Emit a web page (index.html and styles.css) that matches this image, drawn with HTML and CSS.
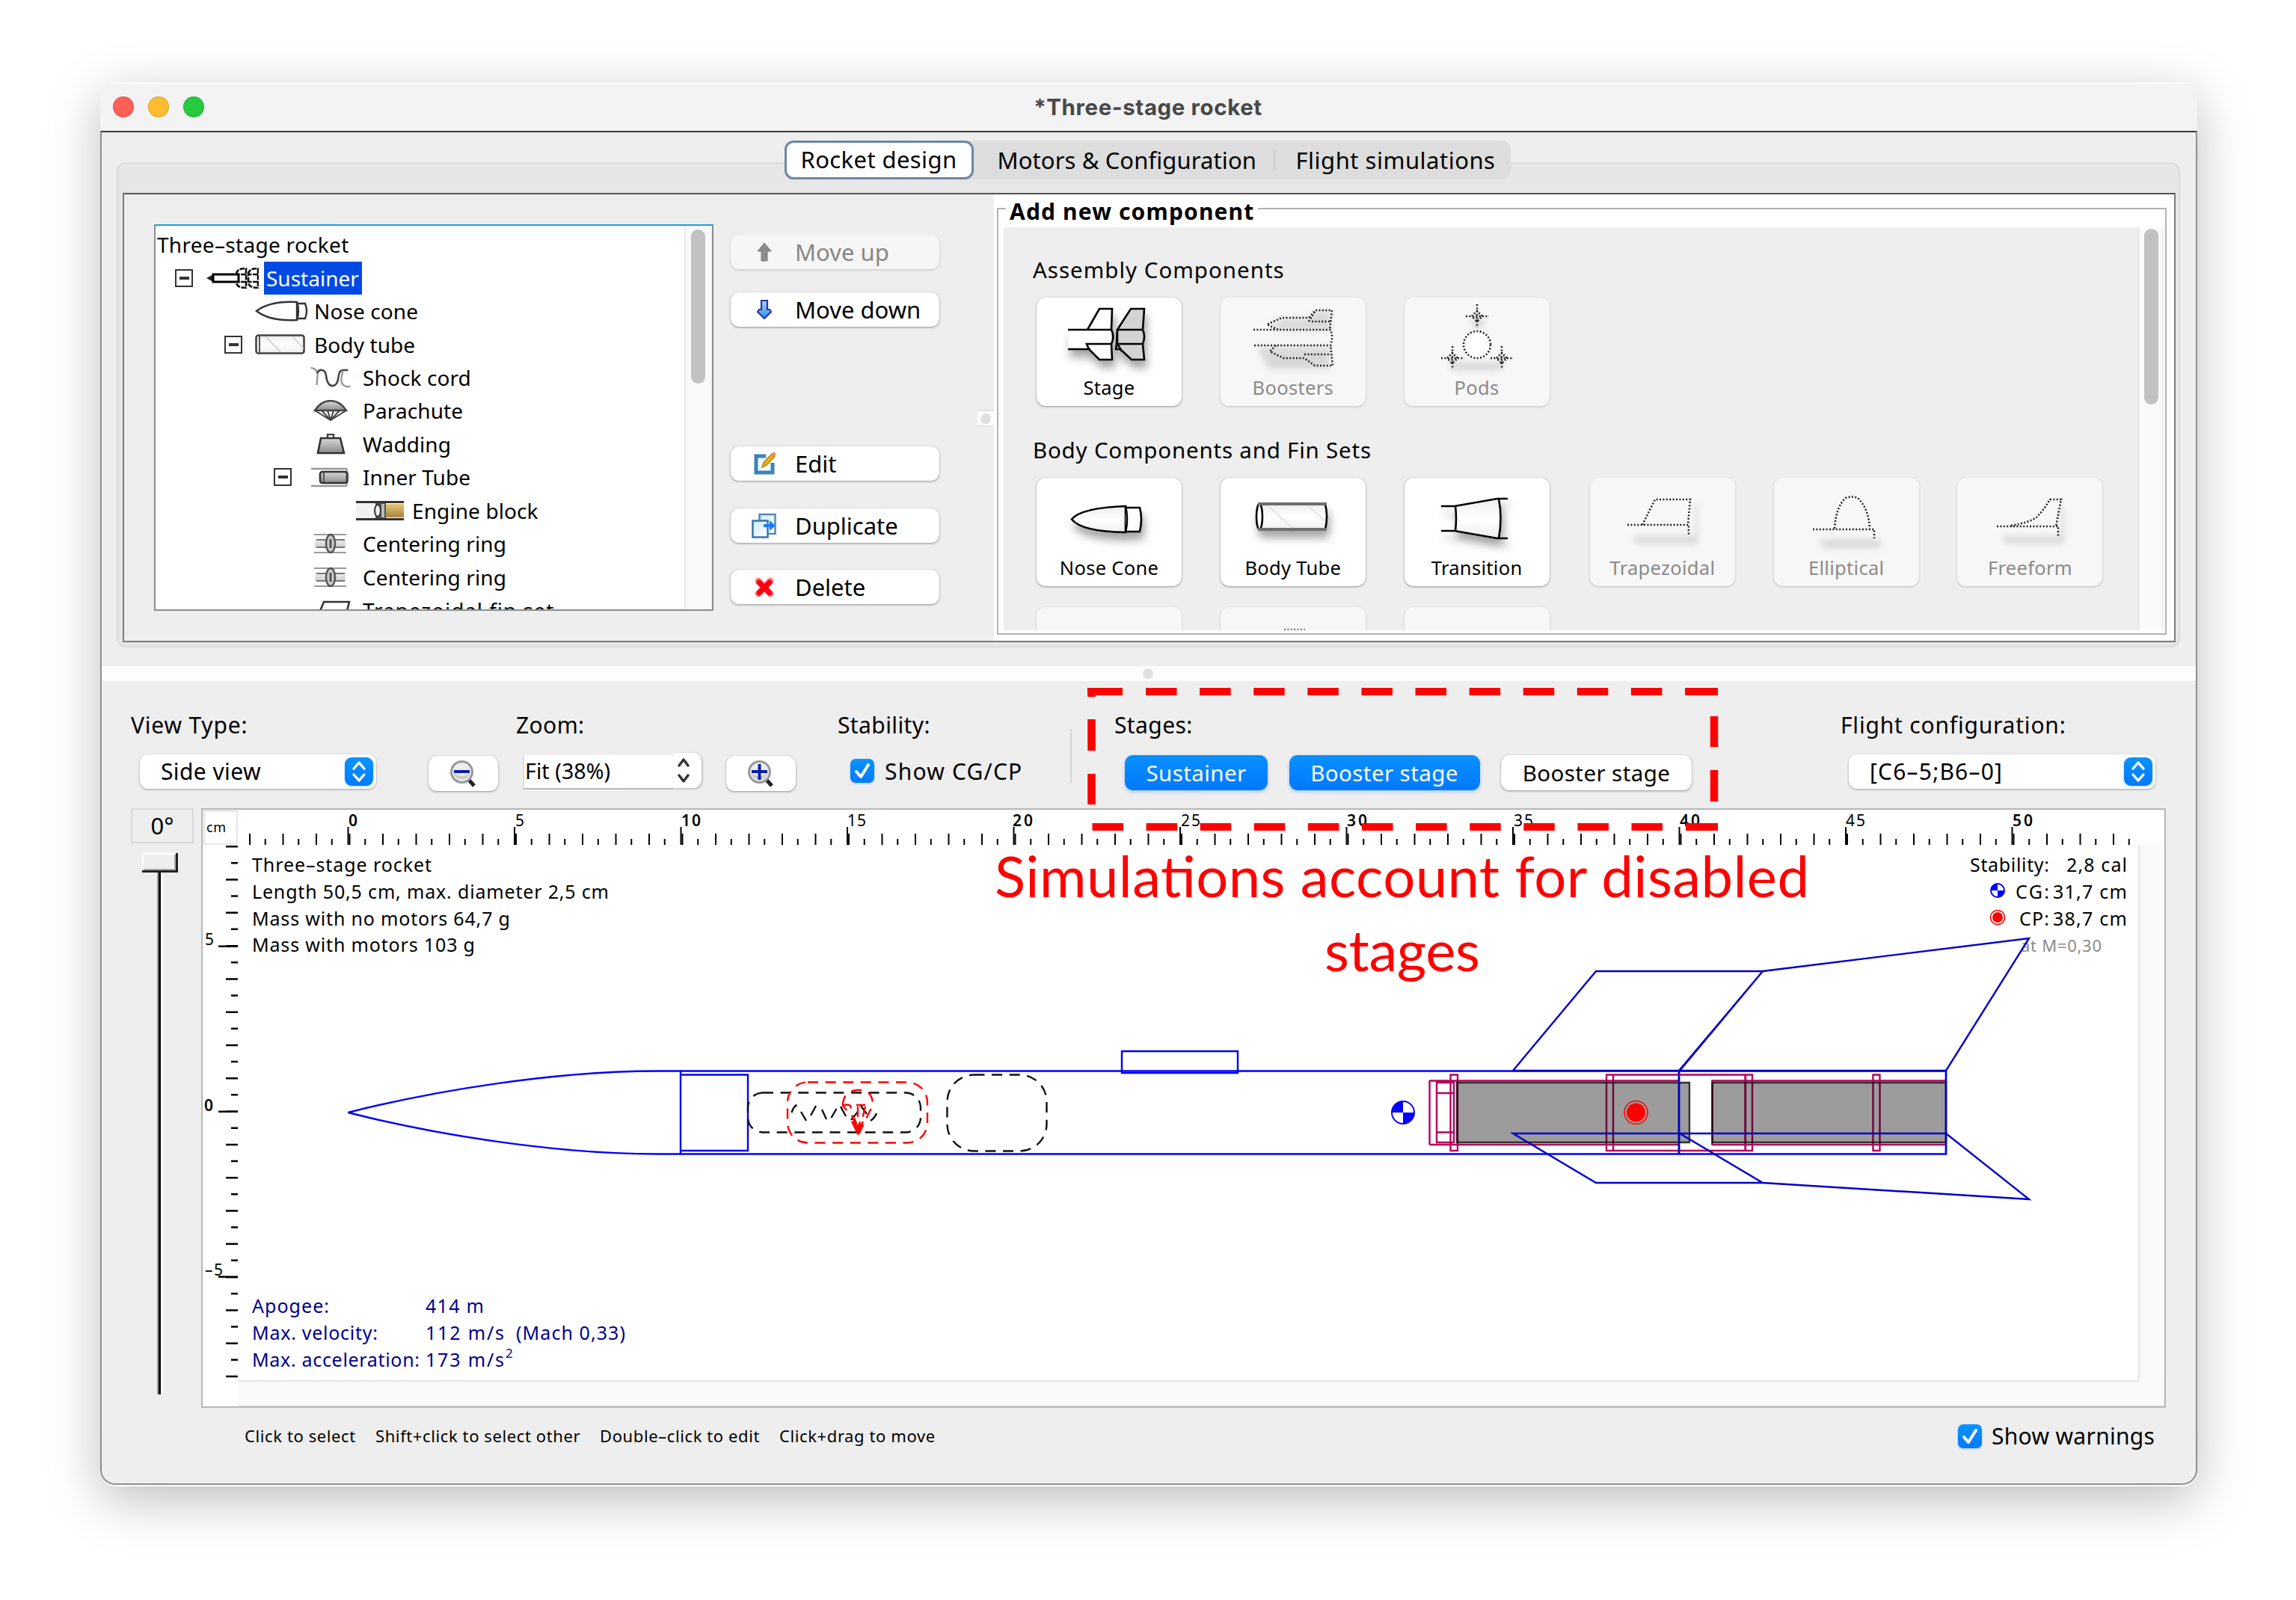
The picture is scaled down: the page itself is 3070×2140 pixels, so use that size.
FILE: index.html
```html
<!DOCTYPE html>
<html lang="en">
<head>
<meta charset="utf-8">
<title>Three-stage rocket</title>
<link rel="stylesheet" href="styles.css">
</head>
<body>
<svg class="defs" width="0" height="0" aria-hidden="true">
  <defs>
    <linearGradient id="metal" x1="0" y1="0" x2="0" y2="1"><stop offset="0" stop-color="#d8d8d8"/><stop offset="1" stop-color="#8c8c8c"/></linearGradient>
    <linearGradient id="paper" x1="0" y1="0" x2="0" y2="1"><stop offset="0" stop-color="#ececec"/><stop offset=".5" stop-color="#fff"/><stop offset="1" stop-color="#eee"/></linearGradient>
    <linearGradient id="gold" x1="0" y1="0" x2="0" y2="1"><stop offset="0" stop-color="#e6c67c"/><stop offset="1" stop-color="#a8843c"/></linearGradient>
    <linearGradient id="arrowBlue" x1="0" y1="0" x2="0" y2="1"><stop offset="0" stop-color="#a9d0ff"/><stop offset="1" stop-color="#2e8fe0"/></linearGradient>
    <linearGradient id="sheet" x1="0" y1="0" x2="1" y2="1"><stop offset="0" stop-color="#cfe9fa"/><stop offset="1" stop-color="#fff"/></linearGradient>
    <symbol id="i-ring" viewBox="0 0 46 28"><path d="M1 2h43M1 26h43" stroke="#999" stroke-width="2"/><path d="M2 9h41v10H2z" fill="url(#metal)" opacity=".45"/><path d="M4 9h38M4 19h38" stroke="#777" stroke-width="2"/><ellipse cx="23" cy="14" rx="6" ry="12" fill="#ccc" stroke="#555" stroke-width="2.5"/><path d="M23 8v12" stroke="#555" stroke-width="3"/></symbol>
    <symbol id="i-updown" viewBox="0 0 38 38"><path d="M12 15l7-8 7 8M12 23l7 8 7-8" fill="none" stroke="currentColor" stroke-width="3.4" stroke-linecap="round" stroke-linejoin="round"/></symbol>
    <symbol id="i-check" viewBox="0 0 32 32"><path d="M8 17l6 7L24 8" fill="none" stroke="#fff" stroke-width="4" stroke-linecap="round" stroke-linejoin="round"/></symbol>
    <symbol id="i-lens" viewBox="0 0 36 38"><path d="M23 25l9 10" stroke="#222" stroke-width="5"/><circle cx="15.500" cy="16.500" r="14" fill="#ededf0" stroke="#999" stroke-width="3"/><path d="M4 18q12 8 23 0a12 12 0 0 1-23 0z" fill="#c9c9cc"/></symbol>
  </defs>
</svg>

<div class="window">
  <header class="titlebar">
    <div class="lights"><i class="light red"></i><i class="light amber"></i><i class="light green"></i></div>
    <h1 class="title">*Three-stage rocket</h1>
  </header>

  <div class="content">
    <nav class="tabs">
      <span class="tab active">Rocket design</span>
      <span class="tab tab-motors">Motors &amp; Configuration</span>
      <span class="tab tab-sim">Flight simulations</span>
    </nav>

    <section class="design-outline">
      <div class="design">
        <div class="left-pane">
          <div class="tree">
            <ul class="tree-list">
              <li class="row root"><span class="name">Three–stage rocket</span></li>
              <li class="row lv1"><i class="expander"></i>
                <svg class="ic" width="70" height="28" viewBox="0 0 70 28"><path d="M0 14l9-5v10z" fill="#222"/><path d="M9 9h34v10H9z" fill="#fff" stroke="#000" stroke-width="3"/><path d="M40 9q0-8 13-8v26q-13 0-13-8M53 9H42M53 19H42M56 9q0-8 13-8v26q-13 0-13-8zM69 9H57M69 19H57" fill="none" stroke="#111" stroke-width="2.6" stroke-dasharray="7 1.500"/></svg>
                <span class="name selected">Sustainer</span></li>
              <li class="row lv2"><svg class="ic" width="71" height="28" viewBox="0 0 71 28"><path d="M56 2Q20 0 2 14q18 14 54 12z" fill="#fff" stroke="#333" stroke-width="2.4"/><path d="M56 2q4 12 0 24M57 4h10q4 10 0 20H57" fill="none" stroke="#333" stroke-width="2.4"/></svg><span class="name">Nose cone</span></li>
              <li class="row lv2 open"><i class="expander"></i><svg class="ic" width="67" height="27" viewBox="0 0 67 27"><rect x="1.500" y="1.500" width="64" height="24" rx="3" fill="url(#paper)" stroke="#444" stroke-width="2.600"/><path d="M6 2v23" stroke="#555" stroke-width="2"/><path d="M14 3l20 21M50 3l15 16" stroke="#ccc" stroke-width="1.500" fill="none"/></svg><span class="name">Body tube</span></li>
              <li class="row lv3"><svg class="ic" width="55" height="28" viewBox="0 0 55 28"><path d="M1 1q10 1 9 12t-1 11" fill="none" stroke="#999" stroke-width="2.4"/><path d="M10 8q2-5 6-4 5 0 6 10 2 12 9 11 6-1 7-12 1-9 6-9h7" fill="none" stroke="#444" stroke-width="2.6"/><path d="M44 6q-6 16 4 20h6" fill="none" stroke="#999" stroke-width="2.4"/></svg><span class="name">Shock cord</span></li>
              <li class="row lv3"><svg class="ic" width="46" height="28" viewBox="0 0 46 28"><path d="M2 14Q10 1 23 1t21 13z" fill="url(#metal)" stroke="#444" stroke-width="2.400"/><path d="M2 14l21 13 21-13M11 14l12 13 12-13M19 14l4 13 4-13" fill="none" stroke="#444" stroke-width="2"/></svg><span class="name">Parachute</span></li>
              <li class="row lv3"><svg class="ic" width="42" height="28" viewBox="0 0 42 28"><path d="M17 6V1h8v5" fill="none" stroke="#444" stroke-width="2.500"/><path d="M8 6h26l5 20H4z" fill="url(#metal)" stroke="#333" stroke-width="2.600"/></svg><span class="name">Wadding</span></li>
              <li class="row lv3 open"><i class="expander"></i><svg class="ic" width="52" height="27" viewBox="0 0 52 27"><path d="M0 2h47q5 11 0 23H0" fill="none" stroke="#999" stroke-width="2.400"/><rect x="12" y="6" width="36" height="15" rx="3" fill="url(#metal)" stroke="#333" stroke-width="2.600"/><path d="M17 7v13" stroke="#555" stroke-width="2"/></svg><span class="name">Inner Tube</span></li>
              <li class="row lv4"><svg class="ic" width="64" height="26" viewBox="0 0 64 26"><path d="M0 3h26v20H0z" fill="#f2f2f2"/><path d="M0 1.500h64M0 24.500h64" stroke="#333" stroke-width="3"/><path d="M26 3h14v20H26z" fill="#555"/><ellipse cx="29" cy="13" rx="4" ry="8" fill="#eee" stroke="#333" stroke-width="2"/><path d="M36 4v18" stroke="#bbb" stroke-width="4"/><path d="M40 4h24v18H40z" fill="url(#gold)"/></svg><span class="name">Engine block</span></li>
              <li class="row lv3"><svg class="ic" width="46" height="28"><use href="#i-ring"/></svg><span class="name">Centering ring</span></li>
              <li class="row lv3"><svg class="ic" width="46" height="28"><use href="#i-ring"/></svg><span class="name">Centering ring</span></li>
              <li class="row lv3"><svg class="ic" width="54" height="27" viewBox="0 0 54 27"><path d="M18 2h34l-6 24H8z" fill="#fff" stroke="#333" stroke-width="2.600"/></svg><span class="name spaced">Trapezoidal fin set</span></li>
            </ul>
            <div class="scrollbar"><i class="thumb tree-thumb"></i></div>
          </div>

          <div class="actions">
            <button class="btn action disabled"><svg class="aic" width="24" height="26" viewBox="0 0 24 26"><path d="M12 1l9 11h-5v13H8V12H3z" fill="#8c8c8c" stroke="#7a7a7a"/></svg>Move up</button>
            <button class="btn action down"><svg class="aic" width="24" height="26" viewBox="0 0 24 26"><path d="M12 25l9-9-2-3h-3V1H8v12H5l-2 3z" fill="url(#arrowBlue)" stroke="#2b35a8" stroke-width="2.200"/></svg>Move down</button>
            <button class="btn action edit"><svg class="aic" width="32" height="32" viewBox="0 0 32 32"><path d="M18 6H5v22h22V15" fill="#f4f9fd" stroke="#3c83b8" stroke-width="5"/><path d="M13 21l2-6L26 3l4 3-11 12z" fill="#f5b400" stroke="#b97f1a" stroke-width="1.500"/><path d="M26 3l2-3 4 3-2 3z" fill="#ef8d7a"/></svg>Edit</button>
            <button class="btn action dup"><svg class="aic" width="34" height="34" viewBox="0 0 34 34"><rect x="10.500" y="2" width="21" height="26" fill="url(#sheet)" stroke="#4f86b4" stroke-width="2.400"/><rect x="1.500" y="10.500" width="20" height="22" fill="url(#sheet)" stroke="#3c78ac" stroke-width="2.600"/><path d="M16 15h8v-5l8 7-8 7v-5h-8z" fill="#1b7cf5"/></svg>Duplicate</button>
            <button class="btn action del"><svg class="aic" width="28" height="28" viewBox="0 0 28 28"><path d="M6 6l16 17M22 6L6 23" stroke="#f88" stroke-width="9" stroke-linecap="round"/><path d="M7 8l14 14M21 8L7 22" stroke="#fb0012" stroke-width="7" stroke-linecap="round"/></svg>Delete</button>
          </div>
          <div class="v-handle"><i class="dot"></i></div>
        </div>

        <div class="right-pane">
          <div class="group">
            <h2 class="group-title">Add new component</h2>
            <div class="group-body">
              <div class="components">
                <h3 class="sub">Assembly Components</h3>
                <div class="cards">
                  <div class="card"><svg class="art" viewBox="0 0 194 105">
                    <g class="shade"><path d="M42 43h58v26H42z" fill="#fff"/><g class="ink"><path d="M68 43L84 15h17l-1 28M70 69l-3-7h33l1 21H84z" fill="#fff"/><path d="M42 43h58q5 9 0 19M42 69h30"/><path d="M108 43l18-28h18l-2 28q4 9 0 19l2 21h-17L112 69h-6l1-7z" fill="#d3d3d3"/><path d="M108 43h34M107 62h35M108 43v19l6 10"/></g></g></svg>Stage</div>
                  <div class="card off"><svg class="art" viewBox="0 0 194 105">
                    <path d="M50 66h96v30H64zM68 32l18-4h34l8-10h19v26H77z" class="haze"/><g class="dots"><path d="M44 43h103q4 10 0 21H44M77 43L62 36l20-9h36l9-10h22l-3 26M118 32l8-13M122 32h25M74 64l-8 8 18 9h28l14 10h24l-3-27M112 76h36"/></g></svg>Boosters</div>
                  <div class="card off"><svg class="art" viewBox="0 0 194 105">
                    <path d="M86 30h22l-6 12H94zM58 86h80l-14 12H66z" class="haze"/><g class="dots"><circle cx="97" cy="63" r="18" fill="#fff"/><path d="M97 9v31M82 25h31M90 25l7-7 7 7-7 7zM64 65v31M49 81h31M57 81l7-7 7 7-7 7zM130 65v31M115 81h31M123 81l7-7 7 7-7 7z"/></g></svg>Pods</div>
                </div>
                <h3 class="sub second">Body Components and Fin Sets</h3>
                <div class="cards">
                  <div class="card"><svg class="art" viewBox="0 0 194 105">
                    <g class="ink shade"><path d="M119 38Q60 40 47 55.500 60 72 119 73z" fill="url(#paper)"/><path d="M119 38q4 17 0 35M120 40h18q4 15 0 32h-18" fill="#fff"/></g></svg>Nose Cone</div>
                  <div class="card"><svg class="art" viewBox="0 0 194 105">
                    <g class="ink shade"><path d="M52 35h88q4 17 0 34H52z" fill="url(#paper)"/><ellipse cx="52" cy="52" rx="4" ry="17" fill="#fff"/></g><path d="M50 35h92M50 69h92" stroke="#6e6e6e" stroke-width="4"/><path d="M64 38l32 29M118 38l22 20" stroke="#ddd" stroke-width="1.500"/></svg>Body Tube</div>
                  <div class="card"><svg class="art" viewBox="0 0 194 105">
                    <g class="ink shade"><path d="M68 38l58-10q5 26 0 53L68 71z" fill="url(#paper)" stroke="none"/><path d="M49 38h18l57-10h14M49 71h18l57 10h14M68 38q2 16 0 33M126 28q5 26 0 53"/></g></svg>Transition</div>
                  <div class="card off fin-first"><svg class="art" viewBox="0 0 194 105">
                    <path d="M58 78h82V36h4v52H62z" class="haze"/><g class="dots"><path d="M70 63l17-34h47l-3 34M50 63h82v13"/></g></svg>Trapezoidal</div>
                  <div class="card off"><svg class="art" viewBox="0 0 194 105">
                    <path d="M62 82h80v12H66z" class="haze"/><g class="dots"><path d="M81 68q2-30 15-41 8-3 16 0 15 15 16 41M52 69h82v12"/></g></svg>Elliptical</div>
                  <div class="card off"><svg class="art" viewBox="0 0 194 105">
                    <path d="M60 78h78V40h5v48H64z" class="haze"/><g class="dots"><path d="M72 64q24-4 34-11 10-10 18-24h15l-7 36M53 65h82v13"/></g></svg>Freeform</div>
                </div>
                <div class="cards third">
                  <div class="card off"></div>
                  <div class="card off"><svg class="art" viewBox="0 0 194 105"><path d="M85 30h28" stroke="#777" stroke-width="2.500" stroke-dasharray="2 2.400"/></svg></div>
                  <div class="card off"></div>
                </div>
              </div>
              <div class="scrollbar wide"><i class="thumb group-thumb"></i></div>
            </div>
          </div>
        </div>
      </div>
    </section>

    <div class="h-handle"><i class="dot"></i></div>

    <section class="controls">
      <div class="ctl view-type"><label>View Type:</label>
        <div class="select"><span class="value">Side view</span><svg class="stepper" width="38" height="38"><use href="#i-updown"/></svg></div></div>
      <div class="ctl zoom"><label class="zoom-label">Zoom:</label>
        <div class="zoom-row">
          <button class="btn lens"><svg width="36" height="38" viewBox="0 0 36 38"><use href="#i-lens" width="36" height="38"/><path d="M5 16h21" stroke="#0a1ea8" stroke-width="4"/></svg></button>
          <div class="combo"><span class="combo-field">Fit (38%)</span><span class="combo-step"><svg width="38" height="47" viewBox="0 -4 38 47"><path d="M7 13l6-8 6 8M7 26l6 8 6-8" fill="none" stroke="#333" stroke-width="3.400" stroke-linecap="round" stroke-linejoin="round"/></svg></span></div>
          <button class="btn lens"><svg width="36" height="38" viewBox="0 0 36 38"><use href="#i-lens" width="36" height="38"/><path d="M5 16h21M15.500 6v21" stroke="#0a1ea8" stroke-width="4"/></svg></button>
        </div></div>
      <div class="ctl stability"><label>Stability:</label>
        <div class="check cg-check"><svg class="box" width="32" height="32"><use href="#i-check"/></svg>Show CG/CP</div></div>
      <i class="divider"></i>
      <div class="ctl stages"><label>Stages:</label>
        <div class="stage-row"><button class="btn toggle on s1">Sustainer</button><button class="btn toggle on">Booster stage</button><button class="btn toggle">Booster stage</button></div></div>
      <div class="ctl flight"><label>Flight configuration:</label>
        <div class="select wide-select"><span class="value">[C6–5;B6–0]</span><svg class="stepper" width="38" height="38"><use href="#i-updown"/></svg></div></div>
    </section>

    <section class="main">
      <div class="rotation"><div class="angle">0°</div><i class="knob"></i><i class="track"></i></div>
      <svg class="figure" viewBox="269 1081 2627 802" width="2627" height="802">
        <rect x="269" y="1081" width="2627" height="802" fill="#fff"/>
        <path d="M2859 1130h34v716h-34zM318 1846h2576v35H318z" fill="#fafafa"/>
        <path d="M2860 1130v716M318 1847h2542" stroke="#e6e6e6" stroke-width="2"/>
        <path d="M318 1880h2576" stroke="#eee" stroke-width="2"/>
        <rect x="270" y="1082" width="2625" height="800" fill="none" stroke="#b9b9b9" stroke-width="2.400"/>
        <path d="M273 1085h44v44h-44z" fill="#fff" stroke="#e6e6e6" stroke-width="2"/>

        <!-- rulers: half units, units, every fifth unit -->
        <g class="ticks">
          <path d="M353.750 1126H2850" stroke-width="8" stroke-dasharray="2 42.500"/>
          <path d="M333 1122.500H2850" stroke-width="15" stroke-dasharray="2 42.500"/>
          <path d="M464.500 1118H2700" stroke-width="24" stroke-dasharray="2 220.500"/>
          <path d="M313.500 1153V1842" stroke-width="9" stroke-dasharray="2.500 41.800"/>
          <path d="M310 1131V1843" stroke-width="16" stroke-dasharray="2.500 41.800"/>
          <path d="M305 1264.500V1712" stroke-width="26" stroke-dasharray="2.500 218.500"/>
        </g>
        <g class="t20">
          <text x="276" y="1113" class="t18" textLength="26">cm</text>
          <text x="466" y="1105" class="b">0</text><text x="689" y="1105">5</text>
          <text x="911" y="1105" class="b" textLength="26">10</text><text x="1133" y="1105" textLength="25">15</text>
          <text x="1354" y="1105" class="b" textLength="27">20</text><text x="1579" y="1105" textLength="26">25</text>
          <text x="1801" y="1105" class="b" textLength="27">30</text><text x="2024" y="1105" textLength="26">35</text>
          <text x="2246" y="1105" class="b" textLength="27">40</text><text x="2468" y="1105" textLength="26">45</text>
          <text x="2691" y="1105" class="b" textLength="27">50</text>
          <text x="274" y="1264">5</text><text x="273" y="1486" class="b">0</text><text x="274" y="1706" textLength="24">–5</text>
        </g>

        <g class="t25">
          <text x="337" y="1166" textLength="240">Three–stage rocket</text>
          <text x="337" y="1202" textLength="477">Length 50,5 cm, max. diameter 2,5 cm</text>
          <text x="337" y="1238" textLength="345">Mass with no motors 64,7 g</text>
          <text x="337" y="1273" textLength="298">Mass with motors 103 g</text>
          <text x="2634" y="1166" textLength="106">Stability:</text><text x="2763" y="1166" textLength="81">2,8 cal</text>
          <text x="2695" y="1202" textLength="45">CG:</text><text x="2745" y="1202" textLength="99">31,7 cm</text>
          <text x="2700" y="1238" textLength="40">CP:</text><text x="2745" y="1238" textLength="99">38,7 cm</text>
          <text x="2702" y="1273" class="mach" textLength="108">at M=0,30</text>
        </g>
        <g class="t25 navy">
          <text x="337" y="1756" textLength="103">Apogee:</text><text x="569" y="1756" textLength="78">414 m</text>
          <text x="337" y="1792" textLength="168">Max. velocity:</text><text x="569" y="1792" textLength="105">112 m/s</text><text x="690" y="1792" textLength="146">(Mach 0,33)</text>
          <text x="337" y="1828" textLength="224">Max. acceleration:</text><text x="569" y="1828" textLength="105">173 m/s</text><text x="676" y="1816" class="t16">2</text>
        </g>

        <!-- body -->
        <g class="body-line">
          <path d="M910 1432.500H880C740 1432.500 580 1459 465.500 1488 580 1517 740 1543.500 880 1543.500H910"/>
          <path d="M910 1432.500H2602V1543.500H910zM2245 1432v112M910 1437.500h90v101.500h-90"/>
          <path d="M1500 1406h155v29h-155z"/>
        </g>
        <g class="mount">
          <path d="M1911.500 1445.500H2245M1911.500 1531H2245M1911.500 1445v86M1921 1448h23v80h-23zM1921 1462h23M1921 1514.500h23M1939.500 1437.500h9.500v101.500h-9.500zM2148 1437.500h9v101.500h-9zM2157 1437.500h176.500v101.500H2157zM2334 1437.500h9v101.500h-9zM2504.500 1437.500h9v101.500h-9zM2602 1445.500H2289.500V1531H2602"/>
        </g>
        <g class="motor"><path d="M1948 1448h311v80h-311zM2289.500 1448H2602v80h-312.500z"/></g>
        <path d="M2245 1432v112" stroke="#0000c0" stroke-width="2.600"/>
        <g class="fins">
          <path d="M2023 1432l111-133h223l-112 133zM2246 1432l111-133 356-44-111 177z"/>
          <path d="M2023 1516l111 66h223l-111-66zM2246 1516l111 66 356 22-111-88z"/>
        </g>
        <path d="M2602 1432v112" class="edge"/>

        <g class="dash black">
          <rect x="1000" y="1461.500" width="231" height="53" rx="20"/>
          <rect x="1266.500" y="1437.500" width="133" height="102" rx="36"/>
          <path class="solid" d="M1058.500 1488q3-9 7-10M1071 1487l7 12M1084 1492l7-13M1099 1484l6 13M1111.500 1495l7-12M1124 1480l7 13M1138 1498l9-11M1151 1479l8 11M1164 1499q5-3 8-10"/>
        </g>
        <g class="dash red-line">
          <rect x="1053" y="1447.500" width="187" height="81" rx="27"/>
          <path d="M1127 1479q0-20 20-21t20 20l-18 37-6-18zM1127 1479q6-3 10 0l8 34M1145 1478h12M1147 1480v30M1157 1480l-6 25"/>
          <path d="M1139 1500l8 16 7-16M1143 1500l4 15M1150 1500l-3 15" class="solid"/>
        </g>

        <!-- centre of gravity and centre of pressure marks -->
        <g class="cg"><circle cx="1876" cy="1488" r="15"/><path d="M1876 1488v-15a15 15 0 0 0-15 15zM1876 1488v15a15 15 0 0 0 15-15z"/></g>
        <g class="cg"><circle cx="2671" cy="1191" r="9"/><path d="M2671 1191v-9a9 9 0 0 0-9 9zM2671 1191v9a9 9 0 0 0 9-9z"/></g>
        <g class="cp"><circle cx="2187.500" cy="1488" r="15.500"/><circle cx="2187.500" cy="1488" r="12.500" class="fill"/><circle cx="2671" cy="1227" r="9.500"/><circle cx="2671" cy="1227" r="7" class="fill"/></g>
      </svg>
    </section>

    <footer class="hints">
      <span class="h1">Click to select</span><span class="h2">Shift+click to select other</span><span class="h3">Double–click to edit</span><span class="h4">Click+drag to move</span>
      <div class="check warn"><svg class="box" width="32" height="32"><use href="#i-check"/></svg>Show warnings</div>
    </footer>
  </div>
</div>

<svg class="annotation" viewBox="0 0 3070 2140" width="3070" height="2140">
  <g stroke="#f00" fill="none">
    <path d="M1454 925h47M1532 925H2230" stroke-width="10" stroke-dasharray="41.500 30.600"/>
    <path d="M2253 925h44M1454.500 925h10" stroke-width="10"/>
    <path d="M1460.500 1106H2240" stroke-width="10" stroke-dasharray="41.500 30.600"/>
    <path d="M2254 1106h43M1494 925h7" stroke-width="10"/>
    <path d="M1459.500 920v12M1459.500 962v42M1459.500 1035v41M2292 958v41M2292 1030v42" stroke-width="10.500"/>
  </g>
  <g class="note"><text x="1330" y="1200" textLength="1089">Simulations account for disabled</text><text x="1771" y="1299" textLength="208">stages</text></g>
</svg>
</body>
</html>
```
FILE: styles.css
```css
* { box-sizing: border-box; }
html, body { margin: 0; padding: 0; background: #fff; }
body { width: 3070px; height: 2140px; overflow: hidden; position: relative; display: flex; align-items: flex-start; font-family: "Noto Sans", "Open Sans", sans-serif; font-size: 31px; color: #000; }
h1, h2, h3, ul { margin: 0; padding: 0; font-weight: normal; list-style: none; }
svg { display: block; flex: none; }
.defs { position: absolute; }
button { font: inherit; color: inherit; border: 0; padding: 0; white-space: nowrap; }

.window { width: 2804px; height: 1878px; margin: 110px 0 0 134px; border-radius: 20px; background: #eee; box-shadow: 0 18px 70px rgba(0, 0, 0, .26); overflow: hidden; display: flex; flex-direction: column; border-bottom: 2px solid #fff; }
.titlebar { height: 65px; flex: none; display: flex; align-items: center; padding-bottom: 2px; background: #f3f3f3; border-top: 2px solid #fbfbfb; }
.lights { display: flex; gap: 19px; padding-left: 17px; width: 300px; }
.light { width: 28px; height: 28px; border-radius: 50%; border: 1.500px solid rgba(0, 0, 0, .12); }
.red { background: #ff5f57; }
.amber { background: #febc2e; }
.green { background: #28c840; }
.title { flex: 1; margin-right: 302px; text-align: center; font: 700 29.500px/60px Inter, sans-serif; color: #484848; letter-spacing: .6px; }

.content { flex: 1; display: flex; flex-direction: column; border: 2px solid #8f8f8f; border-top: 2.500px solid #3a3a3a; border-radius: 0 0 20px 20px; background: #eee; }
.tabs { align-self: center; width: 971px; height: 52px; margin: 11px 4px -23px 0; z-index: 1; display: flex; align-items: center; background: #ddd; border-radius: 12px; line-height: 50px; white-space: nowrap; }
.tab.active { width: 253px; height: 52px; background: #fff; border: 3px solid #6d87a3; border-radius: 12px; text-align: center; line-height: 45px; letter-spacing: .4px; }
.tab-motors { padding-left: 32px; width: 401px; letter-spacing: .1px; }
.tab-sim { padding-left: 28px; border-left: 2px solid #c9c9c9; line-height: 28px; letter-spacing: .5px; }

.design-outline { width: 2759px; height: 649px; flex: none; margin-left: 20px; padding: 39px 4px 0 6px; border: 2px solid #dcdcdc; border-radius: 12px; background: #e6e6e6; }
.design { height: 601px; border: 2px solid #7c7c7c; border-top-color: #555; background: #eee; display: flex; }
.left-pane { width: 1163px; flex: none; display: flex; align-items: flex-start; padding: 40px 0 0 40px; }
.tree { width: 748px; height: 517px; border: 2px solid #8c8c8c; border-top-color: #1e9be6; background: #fff; display: flex; overflow: hidden; }
.tree-list { flex: 1; padding-top: 3px; font-size: 28px; overflow: hidden; }
.row { height: 44.450px; display: flex; align-items: center; white-space: nowrap; }
.row .ic { margin-right: 9px; }
.root { padding-left: 2px; }
.lv1 { padding-left: 26px; }
.lv1 .ic { margin: 0 7px 0 18px; }
.lv2 { padding-left: 133px; }
.lv2 .ic { width: 71px; margin-right: 8px; }
.lv2.open { padding-left: 92px; }
.lv2.open .ic { width: 67px; margin: 0 12px 0 17px; }
.lv3 { padding-left: 206px; }
.lv3 .ic { width: 56px; margin-right: 15px; }
.lv3.open { padding-left: 158px; }
.lv3.open .ic { margin-left: 24px; }
.lv4 { padding-left: 268px; }
.lv4 .ic { margin-right: 11px; }
.expander { width: 24px; height: 24px; flex: none; border: 2.500px solid #333; display: flex; align-items: center; justify-content: center; background: #fff; }
.expander::before { content: ""; width: 13px; height: 4px; background: #333; }
.name { line-height: 44px; letter-spacing: .1px; }
.spaced { letter-spacing: .9px; }
.root .name { letter-spacing: .3px; }
.selected { background: #004ae3; color: #fff; padding: 0 4px 0 3px; letter-spacing: 0; }
.scrollbar { width: 37px; flex: none; background: #fafafa; border-left: 2px solid #e9e9e9; border-right: 2px solid #f2f2f2; display: flex; justify-content: center; padding-top: 2px; }
.scrollbar.wide { width: 34px; border-right-color: #ececec; }
.thumb { width: 19px; border-radius: 10px; background: #c1c1c1; }
.tree-thumb { height: 206px; margin-top: 3px; }
.group-thumb { height: 235px; }

.actions { margin: 14px 0 0 23px; width: 279px; display: flex; flex-direction: column; }
.btn { background: #fff; border-radius: 11px; box-shadow: 0 1px 3px rgba(0, 0, 0, .38), 0 0 1px rgba(0, 0, 0, .2); }
.action { height: 46px; display: flex; align-items: center; line-height: 46px; padding-left: 84px; letter-spacing: 0; }
.aic { width: 34px; margin: 0 24px 0 -56px; }
.disabled { background: #f6f6f6; color: #868686; box-shadow: 0 1px 3px rgba(0, 0, 0, .2); }
.down { margin-top: 31px; }
.edit { margin-top: 160px; }
.dup { margin-top: 37px; }
.del { margin-top: 36px; }
.dot { width: 14px; height: 14px; border-radius: 50%; background: #e0e0e0; }
.v-handle { width: 22px; height: 23px; margin: 248px 0 0 51px; background: #fdfdfd; border: solid #e2e2e2; border-width: 2px 0; display: flex; align-items: center; justify-content: center; }

.right-pane { flex: 1; background: #fff; padding: 18px 10px 8px 4px; }
.group { height: 571px; border: 2px solid #b2b2b2; padding: 0 2px 4px 7px; display: flex; flex-direction: column; }
.group-title { align-self: flex-start; height: 40px; margin: -17px 0 1px 3px; padding: 0 5px; background: #fff; font-weight: 700; font-size: 30px; line-height: 40px; letter-spacing: 1.150px; white-space: nowrap; }
.group-body { height: 539px; display: flex; overflow: hidden; }
.components { flex: 1; background: #eee; padding: 37px 0 0 39px; overflow: hidden; }
.sub { height: 40px; line-height: 40px; font-size: 29.500px; letter-spacing: 1px; white-space: nowrap; }
.second { margin-top: 39px; letter-spacing: .8px; }
.cards { display: flex; gap: 51.800px; margin: 17px 0 0 5px; }
.third { margin-top: 28px; }
.card { width: 194px; height: 145px; flex: none; border-radius: 12px; background: #fff; box-shadow: 0 1px 3px rgba(0, 0, 0, .38), 0 0 1px rgba(0, 0, 0, .2); text-align: center; font-size: 25.500px; line-height: 30px; letter-spacing: .3px; }
.card.off { background: #f7f7f7; color: #8a8a8a; box-shadow: 0 1px 3px rgba(0, 0, 0, .2); }
.fin-first { margin-left: 2.500px; }
.art { width: 194px; height: 105px; }
.ink { fill: none; stroke: #000; stroke-width: 2.600; }
.shade { filter: drop-shadow(3px 10px 6px rgba(0, 0, 0, .35)); }
.haze { fill: #c4c4c4; opacity: .6; filter: blur(4px); }
.dots { fill: none; stroke: #222; stroke-width: 2.600; stroke-dasharray: 2 2.400; }

.h-handle { height: 20px; flex: none; margin-top: 25px; background: #fdfdfd; display: flex; align-items: center; justify-content: center; padding-right: 2px; }
.controls { height: 170px; flex: none; padding-left: 39px; display: flex; align-items: flex-start; white-space: nowrap; }
.ctl { padding-top: 39px; display: flex; flex-direction: column; flex: none; }
.ctl label { line-height: 40px; height: 40px; letter-spacing: .8px; font-size: 30px; }
.view-type { width: 398px; }
.zoom { width: 547px; }
.zoom-label { padding-left: 117px; }
.zoom .zoom-label, .stability label, .stages label { letter-spacing: .4px; }
.select { width: 316px; height: 46px; margin: 19px 0 0 12px; padding: 0 4px 0 28px; display: flex; align-items: center; justify-content: space-between; background: #fff; border-radius: 11px; box-shadow: 0 1px 3px rgba(0, 0, 0, .35); font-size: 30px; line-height: 44px; letter-spacing: .4px; }
.stepper { color: #fff; background: linear-gradient(#0a93ff, #007afe); border-radius: 9px; box-shadow: 0 1px 3px rgba(0, 100, 255, .3); }
.zoom-row { display: flex; gap: 33px; margin-top: 17px; align-items: flex-start; }
.lens { width: 93px; height: 47px; margin-top: 4px; display: flex; align-items: center; justify-content: center; }
.combo { display: flex; width: 239px; align-items: flex-start; }
.combo-field { width: 202px; height: 46px; margin-top: 3px; padding-left: 1px; background: #fff; line-height: 42px; font-size: 28.500px; letter-spacing: .1px; border-bottom: 2px solid #bbb; border-left: 2px solid #ddd; }
.combo-step { width: 37px; height: 47px; background: #fff; border-radius: 0 11px 11px 0; box-shadow: 1px 1px 3px rgba(0, 0, 0, .3); }
.stability { width: 311px; }
.check { display: flex; align-items: center; gap: 15px; height: 44px; margin: 19px 0 0 17px; font-size: 30px; }
.cg-check { letter-spacing: 1.200px; gap: 14px; }
.box { background: linear-gradient(#0a93ff, #007afe); border-radius: 7px; box-shadow: 0 1px 3px rgba(0, 100, 255, .3); }
.divider { width: 2px; height: 72px; margin-top: 64px; background: #d6d6d6; }
.stages { width: 971px; padding-left: 57px; }
.stage-row { display: flex; gap: 28.500px; margin: 20px 0 0 14px; }
.toggle { width: 255px; height: 47px; line-height: 45px; font-size: 29.500px; letter-spacing: .4px; }
.s1 { width: 191px; }
.on { background: linear-gradient(#0a90ff, #0079fe); color: #fff; box-shadow: 0 2px 5px rgba(0, 110, 255, .3); }
.flight { margin-left: 57px; }
.wide-select { width: 410px; margin-left: 11px; letter-spacing: 1.200px; }

.main { display: flex; gap: 10px; padding-left: 39px; flex: none; }
.rotation { width: 84px; display: flex; flex-direction: column; align-items: center; }
.angle { width: 84px; height: 47px; border: 2px solid #d9d9d9; text-align: center; line-height: 43px; font-size: 31px; }
.knob { width: 48px; height: 26px; margin: 13px 6px 0 0; background: #eee; border: solid #222; border-width: 0 3px 3px 0; box-shadow: inset 2px 2px 0 #fff, inset -2px -2px 0 #aaa; }
.track { width: 8px; height: 698px; margin-right: 6px; background: linear-gradient(90deg, #999 2px, #000 2px, #000 5px, #fff 5px); }
.figure { font-family: "Noto Sans", sans-serif; }
.ticks path { stroke: #000; fill: none; }
.t18 { font-size: 18px; }
.t20 { font-size: 21px; }
.t25 { font-size: 25px; }
.t16 { font-size: 17px; }
.b { font-weight: 600; }
.navy { fill: #00008b; }
.mach { fill: #8a8a8a; font-size: 22px; }
.body-line path { fill: none; stroke: #0000fa; stroke-width: 2.400; }
.mount path { fill: none; stroke: #b8005f; stroke-width: 2.400; }
.motor path { fill: rgba(0, 0, 0, .39); stroke: rgba(0, 0, 0, .75); stroke-width: 2.400; }
.fins path { fill: none; stroke: #0000c8; stroke-width: 2.400; }
.edge { stroke: #0000c8; stroke-width: 2.400; }
.dash { fill: none; stroke-width: 2.400; stroke-dasharray: 14 9.600; }
.black { stroke: #111; }
.red-line { stroke: #f00; }
.solid { stroke-dasharray: none; }
.cg circle { fill: #fff; stroke: #00f; stroke-width: 2; }
.cg path { fill: #00f; }
.cp circle { fill: none; stroke: #f00; stroke-width: 1.600; }
.cp .fill { fill: #f00; stroke: none; }

.hints { flex: 1; display: flex; align-items: flex-start; padding: 16px 0 0 191px; font-size: 22px; line-height: 42px; letter-spacing: .6px; white-space: nowrap; }
.h1 { width: 175px; }
.h2 { width: 300px; }
.h3 { width: 240px; }
.h4 { width: 1576px; }
.warn { margin: 0; line-height: 42px; gap: 13px; letter-spacing: .3px; }
.annotation { position: absolute; left: 0; top: 0; pointer-events: none; }
.note { font-family: Lato, sans-serif; font-size: 76px; fill: #f00; }
```
